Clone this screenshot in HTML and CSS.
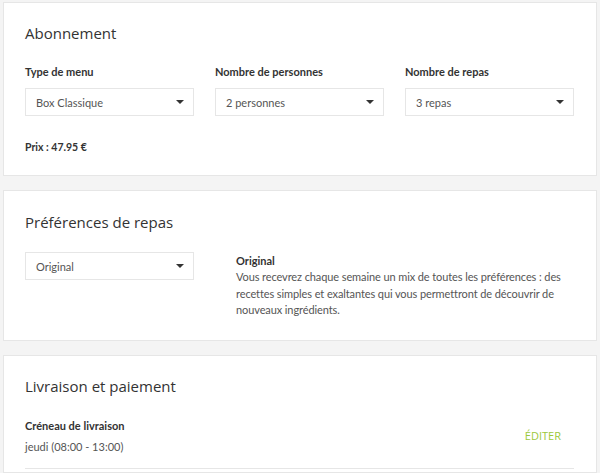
FILE: index.html
```html
<!DOCTYPE html>
<html lang="fr">
<head>
<meta charset="utf-8">
<link rel="stylesheet" href="styles.css">
</head>
<body>
<div class="page">
  <section class="card">
    <h2 class="card-title">Abonnement</h2>
    <div class="fields">
      <div class="field">
        <div class="label">Type de menu</div>
        <div class="select"><span>Box Classique</span><span class="caret"></span></div>
      </div>
      <div class="field">
        <div class="label">Nombre de personnes</div>
        <div class="select"><span>2 personnes</span><span class="caret"></span></div>
      </div>
      <div class="field">
        <div class="label">Nombre de repas</div>
        <div class="select"><span>3 repas</span><span class="caret"></span></div>
      </div>
    </div>
    <div class="price">Prix : 47.95 €</div>
  </section>

  <section class="card card-prefs">
    <h2 class="card-title">Préférences de repas</h2>
    <div class="prefs">
      <div class="select pref-select"><span>Original</span><span class="caret"></span></div>
      <div class="pref-desc">
        <div class="pref-name">Original</div>
        <p>Vous recevrez chaque semaine un mix de toutes les préférences : des recettes simples et exaltantes qui vous permettront de découvrir de nouveaux ingrédients.</p>
      </div>
    </div>
  </section>

  <section class="card card-last">
    <h2 class="card-title">Livraison et paiement</h2>
    <div class="delivery">
      <div>
        <div class="label">Créneau de livraison</div>
        <div class="slot">jeudi (08:00 - 13:00)</div>
      </div>
      <a class="edit">Éditer</a>
    </div>
    <div class="divider"></div>
  </section>
</div>
</body>
</html>
```

FILE: styles.css
```css
* { box-sizing: border-box; }
html, body {
  margin: 0;
  padding: 0;
  background: #f4f4f4;
  font-family: "Lato", "Liberation Sans", sans-serif;
  color: #333;
}
.page {
  width: 600px;
  height: 473px;
  overflow: hidden;
  padding: 2px 3px 0 3px;
  display: flex;
  flex-direction: column;
  gap: 14px;
}
.card {
  background: #fff;
  border: 1px solid #e6e6e6;
  padding: 20px 22px 22px 21px;
}
.card-title {
  margin: 0;
  font-family: "Open Sans", sans-serif;
  font-weight: 400;
  font-size: 15px;
  line-height: 20px;
  color: #333;
}
.fields {
  margin-top: 21px;
  display: grid;
  grid-template-columns: 169px 169px 169px;
  column-gap: 21px;
}
.label {
  font-size: 11px;
  font-weight: 700;
  line-height: 16px;
  color: #333;
}
.select {
  margin-top: 8px;
  height: 28px;
  border: 1px solid #e6e6e6;
  background: #fff;
  display: flex;
  align-items: center;
  justify-content: space-between;
  padding: 0 9px 0 10px;
  font-size: 11px;
  color: #555;
}
.caret {
  width: 0;
  height: 0;
  border-left: 4px solid transparent;
  border-right: 4px solid transparent;
  border-top: 4px solid #333;
}
.price {
  margin-top: 25px;
  font-size: 10.5px;
  font-weight: 700;
  color: #333;
}
.card-prefs { padding-top: 21px; padding-bottom: 21px; }
.prefs {
  margin-top: 20px;
  display: grid;
  grid-template-columns: 169px 1fr;
  column-gap: 42px;
}
.pref-select { margin-top: 0; }
.pref-desc { padding-top: 1px; }
.pref-name {
  font-size: 11px;
  font-weight: 700;
  line-height: 16px;
  color: #333;
}
.pref-desc p {
  margin: 0;
  font-size: 11px;
  letter-spacing: -0.1px;
  line-height: 16.5px;
  color: #555;
}
.card-last { padding-bottom: 0; flex: 1; }
.delivery {
  margin-top: 22px;
  display: flex;
  justify-content: space-between;
  align-items: center;
}
.slot {
  margin-top: 6px;
  font-size: 11px;
  color: #555;
}
.edit {
  font-family: "Open Sans", sans-serif;
  font-size: 11px;
  text-transform: uppercase;
  color: #9cc83b;
  margin-right: 13px;
}
.divider {
  margin-top: 15px;
  height: 1px;
  background: #e6e6e6;
}
```
